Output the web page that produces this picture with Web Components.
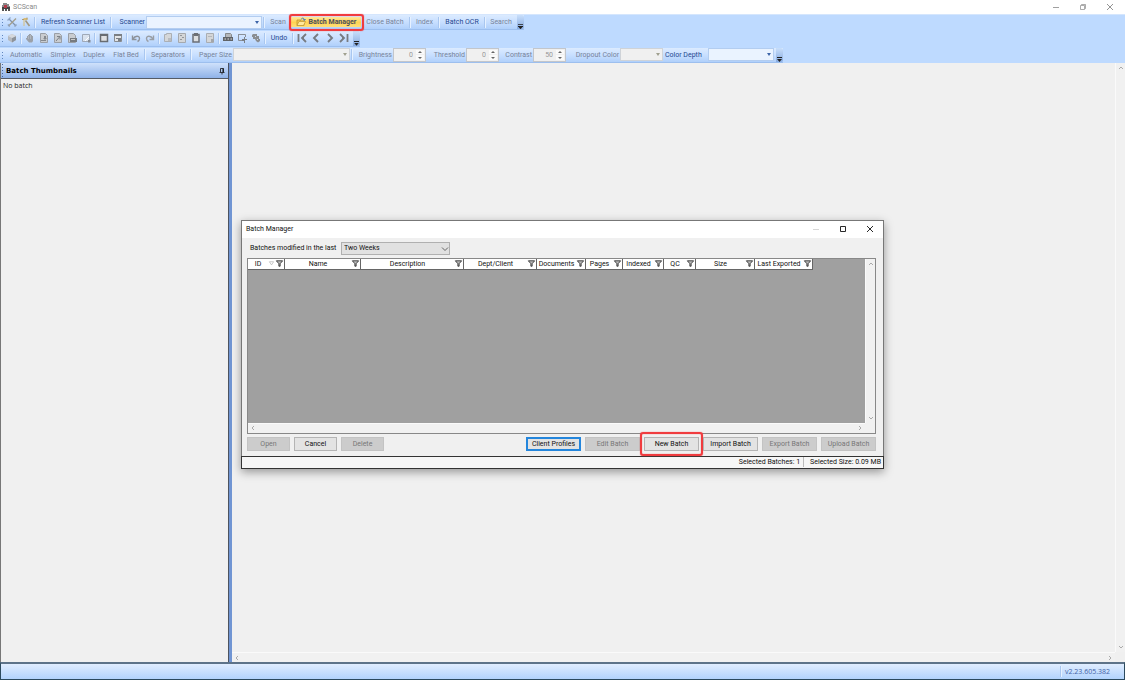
<!DOCTYPE html>
<html lang="en">
<head>
<meta charset="utf-8">
<title>SCScan</title>
<style>
html, body { margin: 0; height: 100%; }
body { font: 7px/10px Roboto, "Open Sans", sans-serif; color: #222; overflow: hidden; }
</style>
</head>
<body>
<sc-app></sc-app>
<script>
const ICONS = {
  app: '<path fill="#8a8a8a" d="M2 1h4v1h2v2h1v1H1V3h1z"/><path fill="#444" d="M1 5h8v2H1z"/><path fill="#b33a4a" d="M3 3h3v3H3z"/><path fill="#555" d="M1 7h2v2H1zM4 7h2v2H4zM7 7h2v2H7z"/>',
  tools: '<path d="M2 2l7 7" stroke="#7f93ad" stroke-width="1.300"/><path d="M9 1.500L1.500 9" stroke="#a39e8a" stroke-width="1.300"/><path d="M.5 3.500l3-3" stroke="#8fa6c6" stroke-width="1.200"/><path d="M.8 7.500l2 2M7.500 9.500l2-2" stroke="#8fa0b8" stroke-width="1.200"/>',
  wand: '<path d="M4.500 3.500l4 5.500" stroke="#a0977f" stroke-width="1.600"/><path d="M2.500 1h4v2h-3v6h-1z" fill="#d9bd78"/><path d="M1 2.500h2M6 .5v2" stroke="#a99b78"/>',
  box: '<path fill="#b5b9bf" d="M5 1l4 2v4L5 9.500 1 7V3z"/><path fill="#8d939b" d="M5 5l4-2v4L5 9.500z"/><path fill="#d5d8dc" d="M5 1l4 2-4 2-4-2z"/>',
  hand: '<path fill="#9ba1a9" d="M2 3h1V2h1V1h2v1h1v1h1v5L7 9.500H4L1 6V5h1z"/><path d="M3.500 3v3M5.500 2v4" stroke="#c4cad2" stroke-width=".5"/>',
  pageIn: '<path fill="#c9ccd0" stroke="#9a9fa6" d="M1.500.5h5l2 2v7h-7z"/><path fill="#85898e" d="M5 3h2v2h1L6 7 4 5h1zM2 7h5v1H2z"/>',
  pageOut: '<path fill="#c9ccd0" stroke="#9a9fa6" d="M1.500.5h5l2 2v7h-7z"/><path d="M4 3.500h3v3M7 3.500L3 8" stroke="#7e8287" fill="none"/>',
  pageOcr: '<path fill="#c9ccd0" stroke="#9a9fa6" d="M1.500.5h5l2 2v7h-7z"/><path fill="#777b80" d="M3 5h7v4H3z"/><path fill="#ccc" d="M4 6h4v1H4z"/>',
  pageEdit: '<path fill="#d9e2ee" stroke="#9fa9b8" d="M1.500 1.500h7v7h-7z"/><path d="M4 8l4-4" stroke="#fff"/><path fill="#858b94" d="M7 7h2.500v2.500H7z"/>',
  frame: '<path fill="#dfe0e2" stroke="#686c71" stroke-width="1.500" d="M1.500 1.500h7v7h-7z"/><path d="M2 2.500h6" stroke="#686c71"/>',
  frame2: '<path fill="#e3e5e7" stroke="#888c91" d="M1.500 1.500h7v7h-7z"/><path fill="#7b7f84" d="M1 1h8v2H1zM3 5h5v1H3zM5 6h3v2H5z"/>',
  undo: '<path d="M1.500 2.500v4h4M2 6C4 2.500 8.500 2.500 8.500 5.500 8.500 7 7.500 8 6.500 8.500" fill="none" stroke="#8d9299" stroke-width="1.400"/>',
  redo: '<path d="M8.500 2.500v4h-4M8 6C6 2.500 1.500 2.500 1.500 5.500 1.500 7 2.500 8 3.500 8.500" fill="none" stroke="#999ea5" stroke-width="1.400"/>',
  copy: '<path fill="#d5d7d9" stroke="#abafb4" d="M1.500 1.500h2v-1h5v8h-7z"/><path fill="#b9bcc0" d="M5 5h3v3H5z"/>',
  paste: '<path fill="#d4d6d8" stroke="#a5a9ae" d="M1.500.5h7v9h-7z"/><path d="M3 2.500h2M5 4.500h2M3 6.500h2" stroke="#92969b"/>',
  doc: '<path fill="#dcdee0" stroke="#6b6f75" stroke-width="1.500" d="M2 1.500h6v7.500H2z"/><path fill="#6b6f75" d="M3 0h4v3H3z"/>',
  doc2: '<path fill="#d4d6d8" stroke="#a9adb2" d="M1.500.5h7v9h-7z"/><path d="M3 3.500h4" stroke="#b3b7bc"/><path fill="#a3a6aa" d="M6 6h3v3H6z"/>',
  ocr: '<path fill="#b5b7b9" stroke="#85888b" d="M2.500.5h5l1 1v5h-6z"/><path fill="#606367" d="M0 4h10v4H0z"/><path d="M1.500 6h1.500M4.500 6H6M7.500 6H9" stroke="#ddd"/>',
  select: '<path d="M1 1.500h7.500V4M1.500 2v5.500H5" stroke="#8a9098" fill="none"/><path fill="#7a7f85" d="M5 6h2V4h1v2h2v1H8v3H7V8H5z"/>',
  pick: '<path fill="#8a8e93" d="M2 1h4v2h2v3h1v2L7 9.500 5 8 4 6H2V4H1V2z"/><path fill="#ccd7e6" d="M4 3h1v1H4zM6 6h1v1H6z"/>',
  folder: '<path fill="#f4c84c" stroke="#b98d26" stroke-width=".7" d="M1 8.500V3h3l1 1h3v4.500z"/><path fill="#ffe99b" stroke="#b98d26" stroke-width=".6" d="M1 8.500l2-4h6.500l-2 4z"/><path d="M5 2.500C6 .5 8 .8 8.500 3M7.200 2.600l1.400.8.800-1.400" fill="none" stroke="#3f74b9"/>',
  first: '<path d="M1.500 1v8M9 1L5 5l4 4M4.500 5H7" fill="none" stroke="#777b82" stroke-width="1.800"/>',
  prev: '<path d="M7 1L3 5l4 4" fill="none" stroke="#777b82" stroke-width="1.900"/>',
  next: '<path d="M3 1l4 4-4 4" fill="none" stroke="#777b82" stroke-width="1.900"/>',
  last: '<path d="M8.500 1v8M1 1l4 4-4 4M3 5h2.500" fill="none" stroke="#777b82" stroke-width="1.800"/>',
  min: '<path d="M2 5.500h6" stroke="currentColor" stroke-width=".8"/>',
  max: '<path d="M2.500 2.500h5v5h-5z" fill="none" stroke="currentColor" stroke-width=".9"/>',
  restore: '<path d="M2.500 3.500h4v4h-4zM3.500 3V2.500h4v4H7" fill="none" stroke="currentColor" stroke-width=".7"/>',
  close: '<path d="M2 2l6 6M8 2L2 8" stroke="currentColor" stroke-width=".9"/>',
  up: '<path d="M3 6l2-2 2 2" fill="none" stroke="currentColor"/>',
  down: '<path d="M3 4l2 2 2-2" fill="none" stroke="currentColor"/>',
  chevron: '<path d="M2 3.500l3 3 3-3" fill="none" stroke="currentColor" stroke-width=".8"/>',
  left: '<path d="M6 3L4 5l2 2" fill="none" stroke="currentColor"/>',
  right: '<path d="M4 3l2 2-2 2" fill="none" stroke="currentColor"/>',
  pin: '<path d="M3.500 6V2.500h3V6M2.500 6.500h5M5 7v1.500" fill="none" stroke="#111" stroke-width=".8"/><path d="M6 2.500v4" stroke="#111"/>',
  filter: '<path d="M1.500 2h7L5.700 5.200V8H4.300V5.200z" fill="#bbb" stroke="#222" stroke-width=".9"/>',
  sort: '<path d="M2 2.500h6L5 7z" fill="none" stroke="#aaa" stroke-width=".9"/>'
};

function define(name, css, html, wire) {
  customElements.define(name, class extends HTMLElement {
    constructor() { super(); this.attachShadow({ mode: 'open' }); }
    connectedCallback() {
      if (this.shadowRoot.childNodes.length) return;
      const w = this.getAttribute('w');
      if (w) this.style.setProperty('--w', w + 'px');
      const t = document.createElement('template');
      t.innerHTML = `<style>*{box-sizing:border-box} ${css}</style>` + (typeof html === 'function' ? html(this) : html);
      this.shadowRoot.append(t.content.cloneNode(true));
      if (wire) wire(this);
    }
  });
}

define('sc-icon', ':host{display:block;width:10px;height:10px;flex:none} svg{display:block;width:100%;height:100%}',
  el => `<svg viewBox="0 0 10 10" aria-hidden="true">${ICONS[el.getAttribute('name')]}</svg>`);

define('sc-iconbutton', `:host{display:flex;flex:none}
  button{display:grid;place-items:center;width:14px;height:100%;border:0;padding:0;background:none;color:inherit}`,
  el => `<button aria-label="${el.getAttribute('name')}"><sc-icon name="${el.getAttribute('name')}"></sc-icon></button>`);

define('sc-sep', `:host{display:block;width:4px;height:11px;flex:none;align-self:center}
  i{display:block;width:2px;height:100%;margin-left:1px;background:#a9c7f0;border-right:1px solid #e6f1ff}`, '<i></i>');

define('sc-tool', `:host{display:flex;flex:none;width:var(--w)}
  button{position:relative;width:100%;border:0;padding:0;background:none;font:inherit;color:#24478f;white-space:nowrap}
  :host([off]) button{color:#77839a}
  :host([active]) button{display:flex;align-items:center;justify-content:center;gap:3px;margin:2px 1px;background:linear-gradient(#ffe79a,#ffd453 55%,#ffe07a);font-weight:700;color:#4b4f5c}
  :host([marked]) button::after{content:"";position:absolute;inset:-3px -3px -4px -2px;border:2px solid #f03c3f;box-shadow:0 0 1px #f03c3f,inset 0 0 1px #f03c3f;border-radius:3px;pointer-events:none}`,
  el => `<button ${el.hasAttribute('off') ? 'disabled' : ''}><slot></slot></button>`);

define('sc-combo', `:host{display:flex;flex:none;align-items:center}
  label{width:var(--label);padding-right:1px;text-align:right;white-space:nowrap;color:#24478f}
  :host([start]) label{text-align:left;padding-left:2px}
  span{position:relative;display:block;width:var(--w)}
  select{display:block;appearance:none;width:100%;height:13px;margin:0;padding:0 4px;border:1px solid #b3cdf0;border-radius:0;background:#eaf3ff;font:inherit;color:inherit}
  span::after{content:"";position:absolute;right:3px;top:5px;border:2px solid transparent;border-top:3px solid #3c64a8;border-bottom:0}
  :host([off]) label{color:#77839a}
  :host([off]) select{background:#f0f0f0;border-color:#cfd3d8;opacity:1}
  :host([off]) span::after{border-top-color:#a0a08f}`,
  el => `<label for="c">${el.getAttribute('label')}</label><span><select id="c" ${el.hasAttribute('off') ? 'disabled' : ''}><option></option></select></span>`,
  el => el.style.setProperty('--label', el.getAttribute('lw') + 'px'));

define('sc-spin', `:host{display:flex;flex:none;align-items:center}
  label{width:var(--w);padding-right:1px;text-align:right;white-space:nowrap;color:#77839a}
  div{display:flex;width:33px;height:14px;border:1px solid #c3c6cb;background:#f0f0f0;padding:1px}
  input{flex:1;min-width:0;border:0;padding:0 3px;margin:0;background:none;font:inherit;color:#989898;text-align:right;appearance:textfield}
  input::-webkit-inner-spin-button{display:none}
  span{display:grid;width:8px;gap:1px}
  button{display:grid;place-items:center;border:0;padding:0;background:#fafafa}
  button::after{content:"";border:2px solid transparent;border-bottom:2px solid #666;border-top:0}
  button:last-child::after{border-bottom:0;border-top:2px solid #666}`,
  el => `<label for="n">${el.getAttribute('label')}</label><div><input id="n" type="number" value="${el.getAttribute('value')}" disabled><span><button disabled aria-label="Increase"></button><button disabled aria-label="Decrease"></button></span></div>`);

define('sc-toolbar', `:host{display:flex;align-self:flex-start;height:16px;background:linear-gradient(#dcebff,#c8dfff 50%,#b0d0fb);border-bottom:1px solid #9dbfee}
  .grip{width:5px;flex:none;margin:3px 0;background:radial-gradient(circle,#5f86bf 1px,transparent 1px) 1px 0/3px 3px repeat-y}
  slot{display:contents}
  .more{width:7px;margin-left:2px;border:0;padding:0;background:linear-gradient(#c9dffb,#86aae0);border-radius:0 2px 2px 0;display:grid;align-items:end;justify-items:center}
  .more::after{content:"";width:5px;height:5px;background:linear-gradient(#222 1px,transparent 1px 2px,#222 2px);clip-path:polygon(0 0,100% 0,100% 40%,50% 100%,0 40%)}`,
  '<span class="grip"></span><slot></slot><button class="more" aria-label="Toolbar options"></button>');

define('sc-titlebar', `:host{display:flex;align-items:center;height:14px;padding-left:1px;background:#fff;color:#888}
  b{flex:1;font-weight:400;padding-left:2px} sc-iconbutton{margin-left:13px;color:#888} sc-iconbutton:last-child{margin-right:8px}`,
  '<sc-icon name="app"></sc-icon><b>SCScan</b><sc-iconbutton name="min"></sc-iconbutton><sc-iconbutton name="restore"></sc-iconbutton><sc-iconbutton name="close"></sc-iconbutton>');

define('sc-scroll', `:host{display:flex;justify-content:space-between;align-items:center;background:#f1f1f1;color:#aaa}
  :host([vertical]){flex-direction:column;width:10px;border-left:1px solid #fafafa}
  :host(:not([vertical])){height:10px;border-top:1px solid #fafafa}`,
  el => el.hasAttribute('vertical') ? '<sc-icon name="up"></sc-icon><sc-icon name="down"></sc-icon>' : '<sc-icon name="left"></sc-icon><sc-icon name="right"></sc-icon>');

define('sc-thumbs', `:host{display:flex;flex-direction:column;width:229px;flex:none;border-right:1px solid #4c5360;border-left:1px solid #777;background:#f0f0f0;color:#222}
  header{display:flex;align-items:center;height:16px;padding:0 1px 0 5px;border-bottom:1px solid #555b66;color:#000;font:bold 7px/10px "DejaVu Sans","Open Sans",sans-serif;
    background:radial-gradient(circle,#46669c 1px,transparent 1px) 0 3px/3px 3px repeat-y,linear-gradient(#cfe1fb,#8fb2e8)}
  h2{flex:1;margin:0;font:inherit} p{margin:0;padding:2px;font-family:"Open Sans","Noto Sans",sans-serif}`,
  '<header><h2>Batch Thumbnails</h2><sc-icon name="pin"></sc-icon></header><p>No batch</p>');

define('sc-button', `:host{display:block;width:var(--w);position:relative}
  button{display:block;width:100%;height:14px;padding:0;border:1px solid #b4b4b4;background:#e3e3e3;color:#111;font:inherit;white-space:nowrap}
  button:disabled{background:#ccc;border-color:#c3c3c3;color:#777}
  :host([primary]) button{border:2px solid #2486dc;border-width:1px 2px;outline:1px solid #2486dc;outline-offset:-2px}
  :host([marked])::after{content:"";position:absolute;inset:-5px -4px;border:2px solid #f03c3f;box-shadow:0 0 1px #f03c3f,inset 0 0 1px #f03c3f;border-radius:3px;pointer-events:none}`,
  el => `<button ${el.hasAttribute('off') ? 'disabled' : ''}><slot></slot></button>`);

const COLS = [['ID', 37], ['Name', 76], ['Description', 103], ['Dept/Client', 73], ['Documents', 49], ['Pages', 37], ['Indexed', 41], ['QC', 32], ['Size', 59], ['Last Exported', 58]];
define('sc-grid', `:host{display:grid;grid-template:1fr 10px/1fr 10px;height:176px;border:1px solid #888;background:#f1f1f1}
  .body{background:#a0a0a0;overflow:hidden}
  table{border-collapse:separate;border-spacing:0;table-layout:fixed;width:565px}
  th{height:11px;padding:0;background:#fff;border-right:1px solid #666;border-bottom:1px solid #666;font-weight:400;color:#111}
  div div{display:flex;align-items:center;height:10px;white-space:nowrap} span{flex:1;text-align:center}
  sc-icon{width:9px;height:9px} sc-icon[name=sort]{width:7px}
  sc-scroll:last-child{grid-column:1}`,
  () => `<div class="body"><table><colgroup>${COLS.map(c => `<col style="width:${c[1]}px">`).join('')}</colgroup><thead><tr>${COLS.map((c, i) => `<th scope="col"><div><span>${c[0]}</span>${i ? '' : '<sc-icon name="sort"></sc-icon>'}<sc-icon name="filter"></sc-icon></div></th>`).join('')}</tr></thead></table></div><sc-scroll vertical></sc-scroll><sc-scroll></sc-scroll>`);

define('sc-dialog', `:host{display:block;width:643px;border:1px solid #777;background:#f0f0f0;box-shadow:0 3px 9px rgba(0,0,0,.38);color:#111}
  header{display:flex;align-items:center;height:17px;padding:0 6px 0 4px;background:#fff}
  h1{flex:1;margin:0;font:inherit} header sc-iconbutton{margin-left:13px} header sc-iconbutton:first-of-type{color:#ccc}
  main{padding:4px 7px 5px 5px}
  .filter{display:flex;align-items:center;height:13px;padding-left:3px;margin-bottom:3px}
  .filter label{width:91px} .filter span{position:relative;width:109px}
  select{display:block;appearance:none;width:100%;height:13px;padding:0 2px;border:1px solid #b0b0b0;border-radius:0;background:#e1e1e1;font:inherit;color:#111}
  .filter sc-icon{position:absolute;right:0;top:2px;color:#444;pointer-events:none}
  .buttons{display:flex;gap:4px;margin-top:3px} .buttons i{flex:1}
  footer{display:flex;justify-content:flex-end;align-items:center;height:13px;border:1px solid #333;background:#f6f6f6;margin:0 -1px -1px}
  footer span{padding:0 2px} footer span+span{border-left:1px solid #bbb;padding-left:6px;margin-left:1px}`,
  `<header><h1>Batch Manager</h1><sc-iconbutton name="min"></sc-iconbutton><sc-iconbutton name="max"></sc-iconbutton><sc-iconbutton name="close"></sc-iconbutton></header>
  <main><div class="filter"><label for="range">Batches modified in the last</label><span><select id="range"><option>Two Weeks</option></select><sc-icon name="chevron"></sc-icon></span></div>
  <sc-grid></sc-grid>
  <div class="buttons"><sc-button w="43" off>Open</sc-button><sc-button w="43">Cancel</sc-button><sc-button w="43" off>Delete</sc-button><i></i>
  <sc-button w="55" primary>Client Profiles</sc-button><sc-button w="55" off>Edit Batch</sc-button><sc-button w="55" marked>New Batch</sc-button><sc-button w="55">Import Batch</sc-button><sc-button w="55" off>Export Batch</sc-button><sc-button w="55" off>Upload Batch</sc-button></div></main>
  <footer><span>Selected Batches: 1</span><span>Selected Size: 0.09 MB</span></footer>`);

define('sc-status', `:host{display:flex;justify-content:flex-end;align-items:center;height:18px;border:1px solid #2c4a5e;border-top:2px solid #5d7389;background:linear-gradient(#e0edff,#b2d3fd);padding-right:14px;color:#3f62a6;font-family:"Open Sans","Noto Sans",sans-serif} span{padding-left:2px}`,
  '<sc-sep></sc-sep><span>v2.23.605.382</span>');

const icons = names => names.split(' ').map(n => n === '|' ? '<sc-sep></sc-sep>' : `<sc-iconbutton name="${n}"></sc-iconbutton>`).join('');
define('sc-app', `:host{display:flex;flex-direction:column;height:100vh;position:relative}
  .bars{display:flex;flex-direction:column;background:#bedaff;border-top:1px solid #d5e6fd;gap:1px;height:49px;flex:none}
  .work{flex:1;display:flex;min-height:0;background:#7095d3}
  .canvas{flex:1;margin-left:3px;display:grid;grid-template:1fr 10px/1fr 10px;background:#f0f0f0}
  .canvas sc-scroll:last-child{grid-column:1}
  .over{position:absolute;inset:0;display:grid;place-content:center;padding-top:8px;pointer-events:none} sc-dialog{pointer-events:auto}`,
  `<sc-titlebar></sc-titlebar>
  <div class="bars">
  <sc-toolbar>${icons('tools wand |')}<sc-tool w="72">Refresh Scanner List</sc-tool><sc-sep></sc-sep><sc-combo label="Scanner" lw="33" w="116"></sc-combo><sc-sep></sc-sep><sc-tool w="24" off>Scan</sc-tool><sc-tool w="72" active marked><sc-icon name="folder"></sc-icon>Batch Manager</sc-tool><sc-tool w="46" off>Close Batch</sc-tool><sc-sep></sc-sep><sc-tool w="25" off>Index</sc-tool><sc-sep></sc-sep><sc-tool w="42">Batch OCR</sc-tool><sc-sep></sc-sep><sc-tool w="28" off>Search</sc-tool></sc-toolbar>
  <sc-toolbar>${icons('box | hand pageIn pageOut pageOcr pageEdit | frame frame2 | undo redo | copy paste doc doc2 | ocr select pick |')}<sc-tool w="24">Undo</sc-tool><sc-sep></sc-sep>${icons('first prev next last')}</sc-toolbar>
  <sc-toolbar><sc-tool w="42" off>Automatic</sc-tool><sc-tool w="32" off>Simplex</sc-tool><sc-tool w="30" off>Duplex</sc-tool><sc-tool w="34" off>Flat Bed</sc-tool><sc-sep></sc-sep><sc-tool w="42" off>Separators</sc-tool><sc-sep></sc-sep><sc-combo label="Paper Size" lw="40" w="117" off></sc-combo><sc-sep></sc-sep><sc-spin label="Brightness" w="39" value="0"></sc-spin><sc-spin label="Threshold" w="40" value="0"></sc-spin><sc-spin label="Contrast" w="34" value="50"></sc-spin><sc-combo label="Dropout Color" lw="54" w="43" off></sc-combo><sc-combo label="Color Depth" lw="45" w="66" start></sc-combo></sc-toolbar>
  </div>
  <div class="work"><sc-thumbs></sc-thumbs><div class="canvas"><div></div><sc-scroll vertical></sc-scroll><sc-scroll></sc-scroll></div></div>
  <sc-status></sc-status>
  <div class="over"><sc-dialog role="dialog"></sc-dialog></div>`);
</script>
</body>
</html>
